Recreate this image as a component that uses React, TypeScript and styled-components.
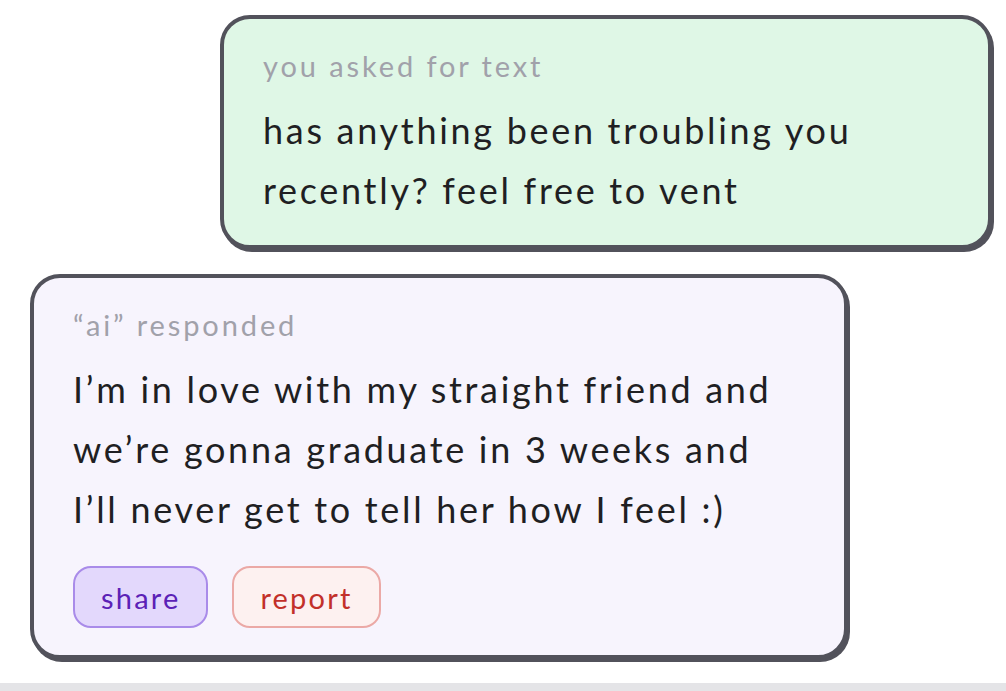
import styled, { createGlobalStyle } from "styled-components";

const GlobalStyle = createGlobalStyle`
  html, body {
    margin: 0;
    padding: 0;
    background: #ffffff;
  }
  body {
    font-family: Lato, "Noto Sans", sans-serif;
  }
`;

const Page = styled.div`
  width: 1006px;
  height: 691px;
  display: flex;
  flex-direction: column;
  box-sizing: border-box;
  overflow: hidden;
`;

const Thread = styled.div`
  flex: 1;
  display: flex;
  flex-direction: column;
  gap: 25px;
  padding: 15px 14px 0 30px;
`;

const Card = styled.div<{ $side: "left" | "right"; $bg: string; $width: number }>`
  align-self: ${({ $side }) => ($side === "right" ? "flex-end" : "flex-start")};
  width: ${({ $width }) => $width}px;
  box-sizing: border-box;
  background: ${({ $bg }) => $bg};
  border: 4px solid #52525b;
  border-radius: 30px;
  box-shadow: 2px 3px 0 #52525b;
  padding: 28px 30px 25px 39px;
`;

const Label = styled.div`
  font-size: 29px;
  line-height: 38px;
  color: #a1a1aa;
  letter-spacing: 2.9px;
`;

const Message = styled.p`
  margin: 15px 0 0;
  font-size: 36px;
  line-height: 60px;
  color: #1f1f23;
  letter-spacing: 2.7px;
  white-space: nowrap;
`;

const Actions = styled.div`
  display: flex;
  gap: 24px;
  margin: 27px 0 2px;
`;

const Pill = styled.button<{ $tone: "share" | "report" }>`
  font-family: inherit;
  font-size: 29px;
  letter-spacing: 2.2px;
  height: 62px;
  padding: 0 26px;
  border-radius: 18px;
  cursor: pointer;
  border: 2.5px solid
    ${({ $tone }) => ($tone === "share" ? "#a98be9" : "#eba9a6")};
  background: ${({ $tone }) => ($tone === "share" ? "#e3d8fc" : "#fdf1f0")};
  color: ${({ $tone }) => ($tone === "share" ? "#5b21b6" : "#c2302a")};
`;

const Footer = styled.div`
  height: 8px;
  background: #e4e4e7;
`;

export default function App() {
  return (
    <>
      <GlobalStyle />
      <Page>
        <Thread>
          <Card $side="right" $bg="#dff7e6" $width={772}>
            <Label>you asked for text</Label>
            <Message>
              has anything been troubling you
              <br />
              recently? feel free to vent
            </Message>
          </Card>
          <Card $side="left" $bg="#f7f4fd" $width={818}>
            <Label>“ai” responded</Label>
            <Message>
              I’m in love with my straight friend and
              <br />
              we’re gonna graduate in 3 weeks and
              <br />
              I’ll never get to tell her how I feel :)
            </Message>
            <Actions>
              <Pill $tone="share">share</Pill>
              <Pill $tone="report">report</Pill>
            </Actions>
          </Card>
        </Thread>
        <Footer />
      </Page>
    </>
  );
}
